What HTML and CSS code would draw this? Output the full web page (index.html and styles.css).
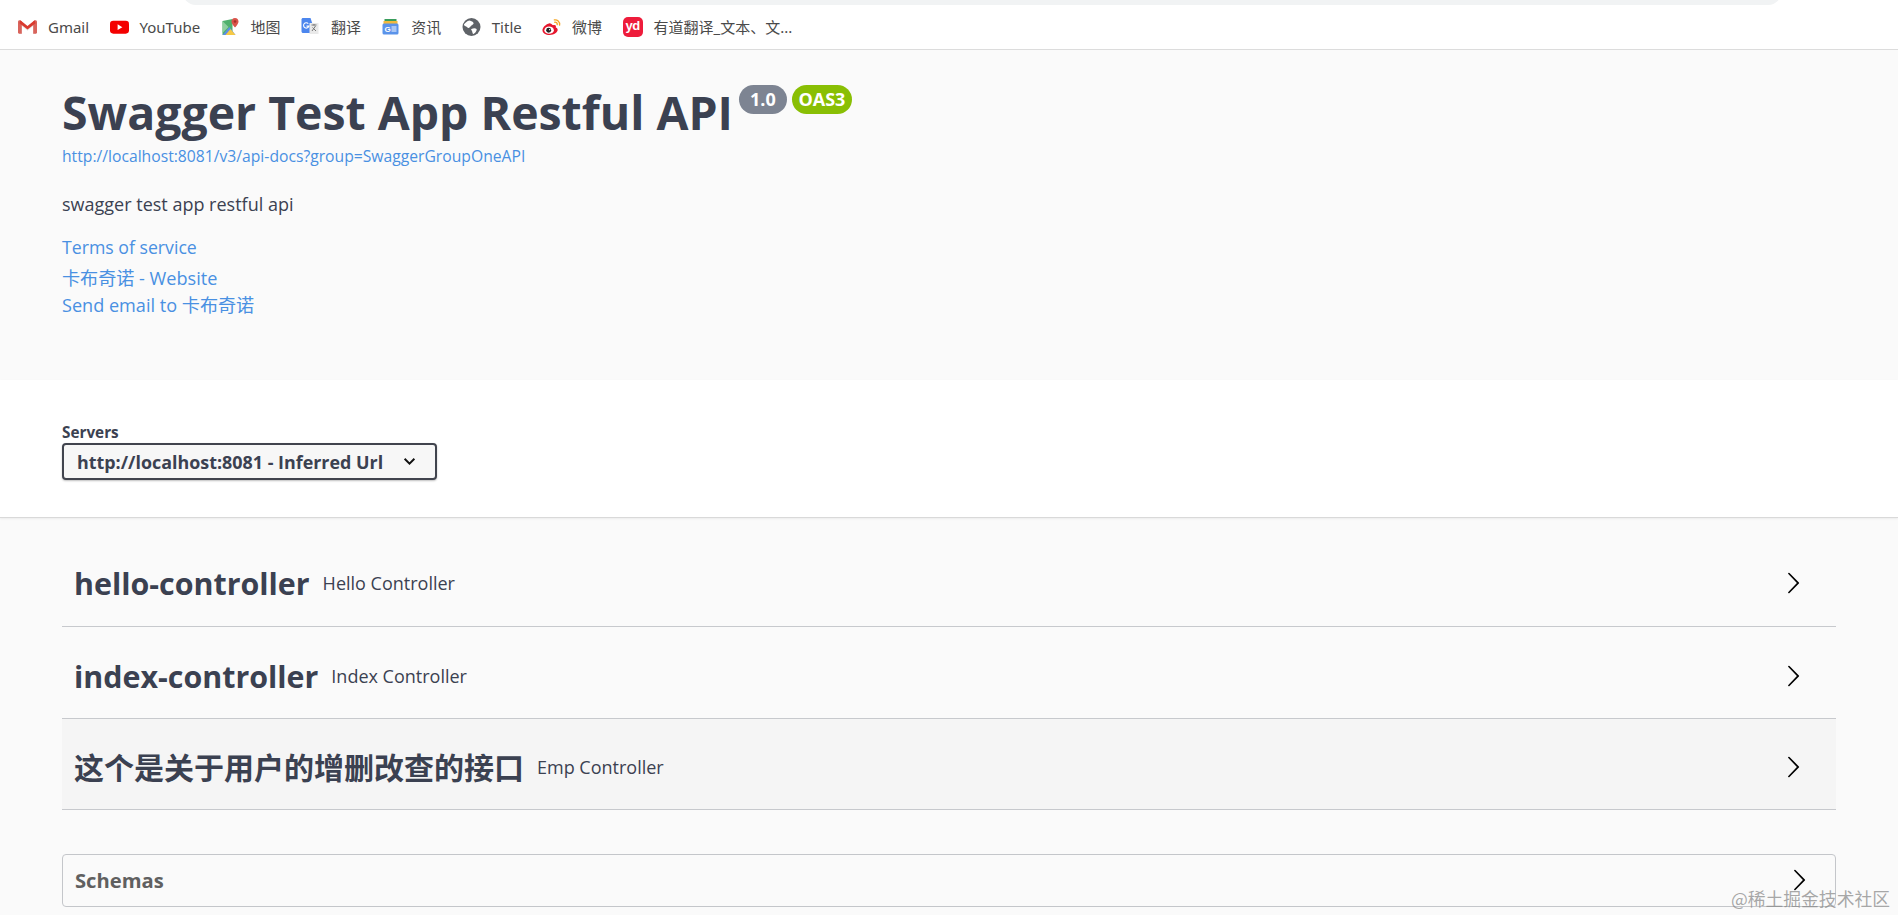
FILE: index.html
```html
<!DOCTYPE html>
<html lang="zh">
<head>
<meta charset="utf-8">
<title>Swagger UI</title>
<link rel="stylesheet" href="styles.css">
</head>
<body>
<div class="omnibox-tail"></div>
<nav class="bookmarks">
  <a class="bm bm-gmail"><svg class="ico" viewBox="0 0 20 16"><path d="M1 15V3l9 7 9-7v12h-3V7l-6 5-6-5v8z" fill="#e8e6e3"/><path d="M0 2.500C0 1 1.500.3 2.700 1.200L4 2.200V15H1.200C.5 15 0 14.500 0 13.800z" fill="#d9645c"/><path d="M20 2.500C20 1 18.500.3 17.300 1.200L16 2.200V15h2.800c.7 0 1.200-.5 1.200-1.200z" fill="#d9645c"/><path d="M2.500 1 10 7l7.500-6 1 3L10 10.500 1.500 4z" fill="#d93a2f"/></svg>Gmail</a>
  <a class="bm bm-yt"><svg class="ico" viewBox="0 0 20 16"><rect x="0" y="1.500" width="20" height="13.500" rx="3.500" fill="#f40000"/><path d="M8 5.200v6l5-3z" fill="#fff"/></svg>YouTube</a>
  <a class="bm bm-map"><svg class="ico" viewBox="0 0 18 18"><path d="M1 3 11 1v16L1 17z" fill="#4fb06d"/><path d="M1 17 8 9l6 8z" fill="#5a8fe8"/><path d="M1 3l6 6-6 6z" fill="#8fce9f"/><path d="M4 17l5-6 5 6z" fill="#f6c945"/><path d="M13.500 0C11.300 0 10 1.700 10 3.500 10 6 13.500 9.500 13.500 9.500S17 6 17 3.500C17 1.700 15.700 0 13.500 0z" fill="#d9534a"/><circle cx="13.500" cy="3.500" r="1.300" fill="#a52f28"/></svg>地图</a>
  <a class="bm bm-tr"><svg class="ico" viewBox="0 0 18 18"><path d="M1.500 0h7.500l5 15H1.500C.7 15 0 14.300 0 13.500V1.500C0 .7.700 0 1.500 0z" fill="#4c86ee"/><path d="M8 5h9v11H8z" fill="#e9e9e9"/><path d="M10 7h5M12.500 6v1.500M10.500 13l3.500-5M11 9.500l3.500 3.500" stroke="#777" stroke-width="1" fill="none"/><path d="M6.800 5.600a2.700 2.700 0 1 0 .6 2.500H5" stroke="#fff" stroke-width="1.100" fill="none"/></svg>翻译</a>
  <a class="bm bm-news"><svg class="ico" viewBox="0 0 18 18"><path d="M3 1h12v5H3z" fill="#3a9d5c"/><path d="M2 3h14v4H2z" fill="#f3b93c"/><rect x="1" y="5.500" width="16" height="11" rx="1.500" fill="#5a93ea"/><text class="ico-g" x="3" y="14">G</text><rect x="10" y="8" width="5" height="6" fill="#a9c7f5"/></svg>资讯</a>
  <a class="bm bm-title"><svg class="ico" viewBox="0 0 18 18"><circle cx="9" cy="9" r="9" fill="#5f6368"/><path d="M7 2.500c2 1 3.500 1 4 2.500s-2 2-3 3.500S6 10.500 5 9.500 2 8 1.500 7 5 2.500 7 2.500zM9 11c2-1 4-1 5 0s-2 5-3 5-1-2-1.500-3S8 11.500 9 11z" fill="#fff"/></svg>Title</a>
  <a class="bm bm-wb"><svg class="ico" viewBox="0 0 20 18"><path d="M8 5C4 6 .5 9.500.5 12.500.5 15.500 4 17.500 8 17.500c5 0 8.500-3 8.500-5.500 0-1.500-1-2.200-2-2.500.5-1.500.2-3-2.500-2.500C11 7.500 11 5.500 8 5z" fill="#e6162d"/><ellipse cx="7.500" cy="12.300" rx="5" ry="3.800" fill="#fff"/><circle cx="7" cy="12.500" r="2.600" fill="#222"/><circle cx="8" cy="11.800" r=".7" fill="#fff"/><path d="M13 1.500c3-.5 6 2 5.500 5.500M13.500 4c1.500-.3 2.800 1 2.500 2.500" stroke="#f5a623" stroke-width="1.400" fill="none" stroke-linecap="round"/></svg>微博</a>
  <a class="bm bm-yd"><span class="yd-logo">yd</span>有道翻译_文本、文...</a>
</nav>

<header class="info">
  <div class="title-row">
    <h1 class="title">Swagger Test App Restful API</h1>
    <span class="badge badge-ver">1.0</span>
    <span class="badge badge-oas">OAS3</span>
  </div>
  <a class="link link-small">http://localhost:8081/v3/api-docs?group=SwaggerGroupOneAPI</a>
  <p class="desc">swagger test app restful api</p>
  <a class="link link-terms">Terms of service</a>
  <a class="link link-contact">卡布奇诺 - Website</a>
  <a class="link link-contact">Send email to 卡布奇诺</a>
</header>

<section class="servers">
  <div class="servers-label">Servers</div>
  <div class="select">
    <span>http://localhost:8081 - Inferred Url</span>
    <svg class="select-caret" viewBox="0 0 12 8"><path d="M1.500 1.500 6 6l4.500-4.500" fill="none" stroke="#111" stroke-width="1.800"/></svg>
  </div>
</section>

<main class="ops">
  <div class="tag">
    <h3 class="tag-name">hello-controller</h3>
    <span class="tag-desc">Hello Controller</span>
    <svg class="arrow" viewBox="0 0 20 20"><path d="M13.250 10 6.109 2.580a.697.697 0 0 1 0-.979.680.680 0 0 1 .969 0l7.830 7.908a.697.697 0 0 1 0 .979l-7.830 7.908a.680.680 0 0 1-.969 0 .697.697 0 0 1 0-.979L13.250 10z"/></svg>
  </div>
  <div class="tag">
    <h3 class="tag-name">index-controller</h3>
    <span class="tag-desc">Index Controller</span>
    <svg class="arrow" viewBox="0 0 20 20"><path d="M13.250 10 6.109 2.580a.697.697 0 0 1 0-.979.680.680 0 0 1 .969 0l7.830 7.908a.697.697 0 0 1 0 .979l-7.830 7.908a.680.680 0 0 1-.969 0 .697.697 0 0 1 0-.979L13.250 10z"/></svg>
  </div>
  <div class="tag tag-hover">
    <h3 class="tag-name tag-name-cjk">这个是关于用户的增删改查的接口</h3>
    <span class="tag-desc">Emp Controller</span>
    <svg class="arrow" viewBox="0 0 20 20"><path d="M13.250 10 6.109 2.580a.697.697 0 0 1 0-.979.680.680 0 0 1 .969 0l7.830 7.908a.697.697 0 0 1 0 .979l-7.830 7.908a.680.680 0 0 1-.969 0 .697.697 0 0 1 0-.979L13.250 10z"/></svg>
  </div>
  <div class="schemas">
    <span class="schemas-name">Schemas</span>
    <svg class="arrow" viewBox="0 0 20 20"><path d="M13.250 10 6.109 2.580a.697.697 0 0 1 0-.979.680.680 0 0 1 .969 0l7.830 7.908a.697.697 0 0 1 0 .979l-7.830 7.908a.680.680 0 0 1-.969 0 .697.697 0 0 1 0-.979L13.250 10z"/></svg>
  </div>
</main>
<div class="watermark">@稀土掘金技术社区</div>
</body>
</html>
```
FILE: styles.css
```css
* { box-sizing: border-box; }
html, body { margin: 0; padding: 0; height: 100%; overflow: hidden; }
body {
  background: #fafafa;
  color: #3b4151;
  font-family: "Open Sans", "Noto Sans CJK SC", sans-serif;
  position: relative;
}
.omnibox-tail {
  position: absolute;
  left: 183px;
  top: -20px;
  width: 1598px;
  height: 25px;
  background: #f1f3f4;
  border-radius: 14px;
}
.bookmarks {
  display: flex;
  align-items: center;
  height: 50px;
  background: #fff;
  border-bottom: 1px solid #dcdcdc;
  padding: 4px 0 0 18px;
  font-family: "Noto Sans", "Noto Sans CJK SC", sans-serif;
  font-size: 15px;
  color: #4a4a4a;
  gap: 20.4px;
}
.bm { display: flex; align-items: center; gap: 11px; white-space: nowrap; }
.ico { width: 19px; height: 18px; flex: none; }
.ico-g { font: bold 8px "Liberation Sans", sans-serif; fill: #fff; }
.yd-logo {
  width: 20px;
  height: 20px;
  border-radius: 5px;
  background: #ee1c3b;
  color: #fff;
  font: bold 13px/18px "Liberation Sans", sans-serif;
  text-align: center;
  letter-spacing: -.5px;
}
.info {
  height: 330px;
  padding: 35px 62px 0;
  display: flex;
  flex-direction: column;
  align-items: flex-start;
}
.title-row { display: flex; align-items: flex-start; height: 61px; }
.title {
  margin: 0;
  font-size: 46.4px;
  line-height: 54px;
  font-weight: 700;
  color: #3b4151;
  white-space: nowrap;
}
.badge {
  height: 29px;
  border-radius: 15px;
  color: #fff;
  font-size: 18px;
  font-weight: 700;
  line-height: 28px;
  text-align: center;
}
.badge-ver { width: 48px; background: #7d8492; margin-left: 6px; }
.badge-oas { width: 60px; background: #89bf04; margin-left: 5px; }
.link {
  color: #4990e2;
  font-size: 17.7px;
  line-height: 27px;
  white-space: nowrap;
}
.link-small { font-size: 15.7px; line-height: 21px; }
.link-terms { margin-bottom: 4px; }
.link-contact { font-size: 18.1px; }
.desc {
  margin: 24px 0 16px;
  font-size: 18px;
  line-height: 27px;
  color: #3b4151;
}
.servers {
  height: 138px;
  background: #fff;
  border-bottom: 1px solid #d9d9d9;
  padding: 44px 62px 0;
  box-shadow: 0 1px 2px rgba(0, 0, 0, .06);
}
.servers-label {
  font-size: 15.3px;
  line-height: 17px;
  font-weight: 700;
}
.select {
  display: flex;
  align-items: center;
  justify-content: space-between;
  width: 375px;
  height: 37px;
  margin-top: 2px;
  padding: 0 19px 0 13px;
  background: #f7f7f7;
  border: 2px solid #41444e;
  border-radius: 4px;
  box-shadow: 0 1px 2px rgba(0, 0, 0, .25);
  font-size: 17.9px;
  font-weight: 700;
  white-space: nowrap;
}
.select-caret { width: 13px; height: 9px; }
.ops { padding: 0 62px; }
.tag {
  display: flex;
  align-items: center;
  height: 92px;
  padding: 8px 12px 0;
  border-bottom: 1px solid #c7c9cd;
}
.tag-hover { background: #f5f5f5; height: 91px; }
.ops .tag:first-child { height: 109px; padding-top: 24px; }
.tag-name {
  margin: 0;
  font-size: 30.4px;
  font-weight: 700;
  line-height: 40px;
  white-space: nowrap;
}
.tag-name-cjk { font-size: 30px; }
.tag-desc { margin-left: 13px; font-size: 18px; color: #3b4151; white-space: nowrap; margin-top: -2px; }
.arrow { width: 24px; height: 24px; margin-left: auto; margin-right: 19px; flex: none; margin-top: -2px; }
.schemas {
  display: flex;
  align-items: center;
  height: 53px;
  margin-top: 44px;
  padding: 0 12px;
  border: 1px solid #c4c6ca;
  border-radius: 4px;
}
.schemas-name { font-size: 20.2px; font-weight: 700; color: #606060; margin-top: -2px; }
.schemas .arrow { margin-right: 12px; margin-top: -2px; }
.watermark {
  position: absolute;
  right: 8px;
  bottom: 5px;
  font-family: "Noto Sans CJK SC", sans-serif;
  font-size: 17.8px;
  line-height: 24px;
  color: rgba(130, 130, 130, .7);
  white-space: nowrap;
}
```
